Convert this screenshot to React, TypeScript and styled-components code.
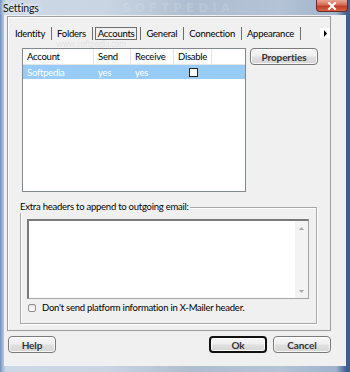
import React from "react";
import styled, { createGlobalStyle } from "styled-components";

const Global = createGlobalStyle`
  html, body { margin: 0; padding: 0; background: #fff; }
  body { font-family: Lato, "Noto Sans", sans-serif; font-size: 9.5px; letter-spacing: -0.25px; color: #000; }
  * { box-sizing: border-box; }
`;

const Window = styled.div`
  position: relative;
  width: 350px;
  height: 372px;
  display: flex;
  flex-direction: column;
  overflow: hidden;
  background: linear-gradient(90deg, #6f90bd 0px, #a9bfd9 3px, #cbd8e6 6px, #c9d5e3 30%, #aebdcf 55%, #b4c3d5 80%, #9fb3cc 96%, #3f5f8f 99%);
`;

const TitleBar = styled.div`
  position: relative;
  height: 15px;
  display: flex;
  align-items: flex-start;
  justify-content: space-between;
`;

const Title = styled.div`
  padding: 2px 0 0 3px;
  font-size: 10.5px;
  line-height: 12px;
  letter-spacing: -0.2px;
  color: #111;
  text-shadow: 0 0 4px #fff, 0 0 6px #fff;
`;

const CloseButton = styled.div`
  width: 32px;
  height: 12px;
  margin-right: 2px;
  border: 1px solid #6b2a22;
  border-top: none;
  border-radius: 0 0 4px 4px;
  background: linear-gradient(#e8a595 0%, #d66d57 45%, #c03c22 55%, #d8644a 100%);
  display: flex;
  align-items: center;
  justify-content: center;
`;

const Watermark = styled.div`
  position: absolute;
  left: 122px;
  top: 1px;
  line-height: 14px;
  font-family: "DejaVu Sans", sans-serif;
  font-weight: bold;
  font-size: 12px;
  letter-spacing: 4px;
  color: rgba(255, 255, 255, 0.14);
  pointer-events: none;
`;

const SmallWatermark = styled.div`
  position: absolute;
  left: 56px;
  top: 39px;
  font-size: 8.5px;
  color: rgba(120, 120, 120, 0.14);
  pointer-events: none;
`;

const Client = styled.div`
  flex: 1;
  margin: 0 4px 6px 4px;
  background: #f0f0f0;
  padding: 1px 15px 0 3px;
  display: flex;
  flex-direction: column;
`;

const TabFrame = styled.div`
  height: 315px;
  border: 1px solid #9c9c9c;
  box-shadow: inset 1px 1px 0 #fff;
  display: flex;
  flex-direction: column;
`;

const TabStrip = styled.div`
  display: flex;
  align-items: center;
  height: 14px;
  margin-top: 9px;
  padding-left: 4px;
`;

const Tab = styled.div<{ $active?: boolean }>`
  height: 13px;
  padding: 0 2px;
  line-height: 11px;
  border: 1px solid ${(p) => (p.$active ? "#6e6e6e" : "transparent")};
  white-space: nowrap;
`;

const Sep = styled.div`
  width: 1px;
  height: 13px;
  margin: 0 2px 0 3px;
  background: #6e6e6e;
`;

const ArrowBtn = styled.div`
  margin-left: auto;
  width: 10px;
  height: 10px;
  background: #fff;
  display: flex;
  align-items: center;
  justify-content: center;
`;

const Content = styled.div`
  flex: 1;
  display: flex;
  flex-direction: column;
  padding: 8px 12px 6px 12px;
`;

const TopRow = styled.div`
  display: flex;
  align-items: flex-start;
  padding-left: 2px;
  gap: 4px;
`;

const ListView = styled.div`
  width: 226px;
  height: 144px;
  border: 1px solid #828790;
  background: #fff;
  display: flex;
  flex-direction: column;
`;

const Row = styled.div<{ $selected?: boolean; $header?: boolean }>`
  display: flex;
  height: ${(p) => (p.$header ? "16px" : "14px")};
  background: ${(p) => (p.$selected ? "#99cbf7" : "#fff")};
  color: ${(p) => (p.$selected ? "#fff" : "#000")};
  border-bottom: ${(p) => (p.$header ? "1px solid #e5e5e5" : "none")};
`;

const Cell = styled.div<{ $w: number; $header?: boolean; $center?: boolean }>`
  width: ${(p) => p.$w}px;
  flex: none;
  padding-left: 4px;
  display: flex;
  align-items: center;
  justify-content: ${(p) => (p.$center ? "center" : "flex-start")};
  border-right: ${(p) => (p.$header ? "1px solid #e2e2e2" : "none")};
`;

const ListCheck = styled.div`
  width: 9px;
  height: 9px;
  border: 1px solid #222;
  background: #fff;
  margin-left: -4px;
`;

const Button = styled.div<{ $w: number; $default?: boolean }>`
  width: ${(p) => p.$w}px;
  height: 17px;
  flex: none;
  border: ${(p) => (p.$default ? "2px solid #111" : "1px solid #7a7a7a")};
  border-radius: 4px;
  background: linear-gradient(#f7f7f7 0%, #eeeeee 48%, #e0e0e0 52%, #d6d6d6 100%);
  box-shadow: inset 0 0 0 1px rgba(255, 255, 255, 0.8);
  display: flex;
  align-items: center;
  justify-content: center;
  font-weight: bold;
  color: #333;
  font-size: 10px;
  letter-spacing: -0.1px;
`;

const Group = styled.fieldset`
  margin: 9px 1px 0 0;
  padding: 0 7px 0 6px;
  flex: 1;
  border: 1px solid #a8a8a8;
  box-shadow: 1px 1px 0 #fff, inset 1px 1px 0 #fff;
  display: flex;
  flex-direction: column;
  min-width: 0;
`;

const Legend = styled.legend`
  padding: 0 1px 0 1px;
  margin-left: -8px;
  line-height: 12px;
`;

const TextBox = styled.div`
  margin-top: 6px;
  height: 80px;
  border: 1px solid #a3a3a3;
  border-top: 2px solid #7a7a7a;
  border-left: 2px solid #7a7a7a;
  background: #fff;
  display: flex;
  justify-content: flex-end;
`;

const ScrollBar = styled.div`
  width: 13px;
  background: #f3f3f3;
  display: flex;
  flex-direction: column;
  justify-content: space-between;
  align-items: center;
  padding: 6px 0 5px;
`;

const CheckRow = styled.label`
  display: flex;
  align-items: center;
  gap: 6px;
  margin-top: 3px;
  padding-left: 1px;
`;

const Check = styled.div`
  width: 8px;
  height: 8px;
  border: 1px solid #8f8f8f;
  border-radius: 2px;
  background: linear-gradient(#e6e6e6, #fdfdfd);
`;

const ButtonRow = styled.div`
  display: flex;
  align-items: center;
  gap: 6px;
  margin-top: 5px;
  padding-left: 1px;
`;

const Spacer = styled.div`
  flex: 1;
`;

export default function App() {
  return (
    <>
      <Global />
      <Window>
        <TitleBar>
          <Title>Settings</Title>
          <Watermark>SOFTPEDIA</Watermark>
          <CloseButton>
            <svg width="10" height="8" viewBox="0 0 10 8">
              <path d="M2 1 L8 7 M8 1 L2 7" stroke="#fff" strokeWidth="2" strokeLinecap="square" />
            </svg>
          </CloseButton>
        </TitleBar>
        <Client>
          <TabFrame>
            <TabStrip>
              <Tab>Identity</Tab>
              <Sep />
              <Tab>Folders</Tab>
              <Sep />
              <Tab $active>Accounts</Tab>
              <Sep />
              <Tab>General</Tab>
              <Sep />
              <Tab>Connection</Tab>
              <Sep />
              <Tab>Appearance</Tab>
              <Sep />
              <ArrowBtn>
                <svg width="5" height="7" viewBox="0 0 5 7">
                  <path d="M1 0 L4 3.5 L1 7 Z" fill="#000" />
                </svg>
              </ArrowBtn>
            </TabStrip>
            <Content>
              <TopRow>
                <ListView>
                  <Row $header>
                    <Cell $w={71} $header>Account</Cell>
                    <Cell $w={37} $header>Send</Cell>
                    <Cell $w={43} $header>Receive</Cell>
                    <Cell $w={38} $header>Disable</Cell>
                  </Row>
                  <Row $selected>
                    <Cell $w={71}>Softpedia</Cell>
                    <Cell $w={37}>yes</Cell>
                    <Cell $w={43}>yes</Cell>
                    <Cell $w={38} $center>
                      <ListCheck />
                    </Cell>
                  </Row>
                </ListView>
                <Button $w={68}>Properties</Button>
              </TopRow>
              <Group>
                <Legend>Extra headers to append to outgoing email:</Legend>
                <TextBox>
                  <ScrollBar>
                    <svg width="5" height="3" viewBox="0 0 5 3">
                      <path d="M0 3 L2.5 0 L5 3 Z" fill="#a8a8a8" />
                    </svg>
                    <svg width="5" height="3" viewBox="0 0 5 3">
                      <path d="M0 0 L2.5 3 L5 0 Z" fill="#a8a8a8" />
                    </svg>
                  </ScrollBar>
                </TextBox>
                <CheckRow>
                  <Check />
                  <span>Don't send platform information in X-Mailer header.</span>
                </CheckRow>
              </Group>
            </Content>
          </TabFrame>
          <ButtonRow>
            <Button $w={48}>Help</Button>
            <Spacer />
            <Button $w={58} $default>Ok</Button>
            <Button $w={58}>Cancel</Button>
          </ButtonRow>
        </Client>
        <SmallWatermark>www.softpedia.com</SmallWatermark>
      </Window>
    </>
  );
}
